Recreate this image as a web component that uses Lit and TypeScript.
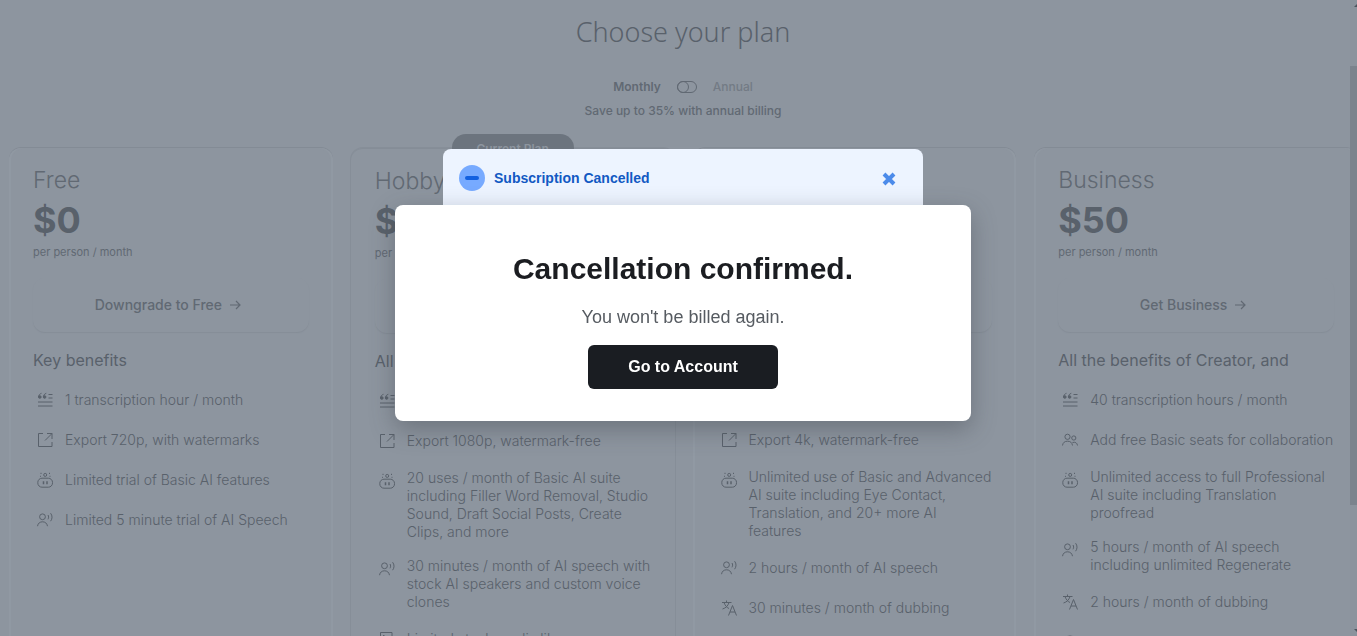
import { LitElement, html, css, svg } from "lit";
import { customElement, property } from "lit/decorators.js";

const glyphs: Record<string, unknown> = {
  quote: svg`<path d="M4.500 1.300C2.600 2 1.600 3.200 1.600 5M9.300 1.300C7.400 2 6.400 3.200 6.400 5M11.500 2.500h4M11.500 6h4M1 10h14.500M1 14h14.500"/><circle cx="2.800" cy="5" r="1.300" fill="currentColor"/><circle cx="7.600" cy="5" r="1.300" fill="currentColor"/>`,
  export: svg`<path d="M6 1.500H1.500v13h13.500V10M10 1.500H15V7M15 1.500L8 8.500"/>`,
  robot: svg`<rect x=".8" y="6.200" width="14.700" height="9" rx="4.200"/><circle cx="8.200" cy="2.900" r="1.500"/><path d="M6.500 9.200v3M10 9.200v3" stroke-width="1.500"/><path d="M4 .8v1.200M12.500 .8v1.200M3.500 3.800v1M13 3.800v1"/>`,
  speech: svg`<circle cx="5.500" cy="4.800" r="2.900"/><path d="M.5 14.200c.5-3 2.400-4.400 5-4.400s4.500 1.400 5 4.400M11 3c.8 1.300.8 3 0 4.300M13.600 1.200c1.900 2.400 1.900 5.600 0 8"/>`,
  people: svg`<circle cx="5.500" cy="4.800" r="2.600"/><circle cx="11.800" cy="6" r="2.100"/><path d="M.5 13.500c.4-2.900 2.200-4.300 5-4.300s4.600 1.400 5 4.300M10.500 10.500c2.800-.7 4.600.3 5 3"/>`,
  dub: svg`<path d="M1 2.500h9.500M5.500 .5v2M8 2.500c-1 3.500-3.200 5.500-6.500 6.500M3 2.500c1 3 2.800 5 5 6M7.500 15.500l4-10 4 10M9 12h5"/>`,
  media: svg`<path d="M13 16V1.500H1.500V16"/><path d="M4 4.500h1.500"/>`,
  globe: svg`<circle cx="8" cy="9" r="7"/><path d="M2 9h12"/>`,
};

interface Benefit { icon: string; text: string }
interface Plan {
  name: string; price: string; action: string; heading: string;
  current?: boolean; benefits: Benefit[];
}

const plans: Plan[] = [
  {
    name: "Free", price: "$0", action: "Downgrade to Free", heading: "Key benefits",
    benefits: [
      { icon: "quote", text: "1 transcription hour / month" },
      { icon: "export", text: "Export 720p, with watermarks" },
      { icon: "robot", text: "Limited trial of Basic AI features" },
      { icon: "speech", text: "Limited 5 minute trial of AI Speech" },
    ],
  },
  {
    name: "Hobbyist", price: "$12", action: "Get Hobbyist", heading: "All the benefits of Free, and", current: true,
    benefits: [
      { icon: "quote", text: "10 transcription hours / month" },
      { icon: "export", text: "Export 1080p, watermark-free" },
      { icon: "robot", text: "20 uses / month of Basic AI suite including Filler Word Removal, Studio Sound, Draft Social Posts, Create Clips, and more" },
      { icon: "speech", text: "30 minutes / month of AI speech with stock AI speakers and custom voice clones" },
      { icon: "media", text: "Limited stock media library" },
    ],
  },
  {
    name: "Creator", price: "$24", action: "Get Creator", heading: "All the benefits of Hobbyist, and",
    benefits: [
      { icon: "quote", text: "30 transcription hours / month" },
      { icon: "export", text: "Export 4k, watermark-free" },
      { icon: "robot", text: "Unlimited use of Basic and Advanced AI suite including Eye Contact, Translation, and 20+ more AI features" },
      { icon: "speech", text: "2 hours / month of AI speech" },
      { icon: "dub", text: "30 minutes / month of dubbing" },
    ],
  },
  {
    name: "Business", price: "$50", action: "Get Business", heading: "All the benefits of Creator, and",
    benefits: [
      { icon: "quote", text: "40 transcription hours / month" },
      { icon: "people", text: "Add free Basic seats for collaboration" },
      { icon: "robot", text: "Unlimited access to full Professional AI suite including Translation proofread" },
      { icon: "speech", text: "5 hours / month of AI speech including unlimited Regenerate" },
      { icon: "dub", text: "2 hours / month of dubbing" },
      { icon: "globe", text: "" },
    ],
  },
];

@customElement("plan-card")
class PlanCard extends LitElement {
  @property({ attribute: false }) plan!: Plan;

  static styles = css`
    :host { display: block; min-width: 0; }
    .card {
      position: relative;
      box-sizing: border-box;
      height: 100%;
      padding: 16px 24px;
      border-radius: 12px;
      box-shadow: 0 -1px 0 #838b95, inset 2px 0 1px #9199a3, inset -2px 0 1px #9199a3;
    }
    .current { border-top: 1px solid #858d97; box-shadow: 0 0 0 1px #868e98; }
    .badge {
      position: absolute;
      top: -15px;
      left: 50%;
      transform: translateX(-50%);
      width: 122px;
      height: 28px;
      border-radius: 14px;
      background: #6c747e;
      color: #8d959f;
      font-size: 12px;
      font-weight: 600;
      line-height: 30px;
      text-align: center;
    }
    .name { margin: 0; font-size: 23px; font-weight: 300; line-height: 32px; }
    .price { margin: 0; font-size: 36px; font-weight: 700; line-height: 48px; color: #59616b; }
    .per { margin: 0; font-size: 11px; line-height: 16px; }
    .action {
      display: flex;
      align-items: center;
      justify-content: center;
      gap: 8px;
      width: 100%;
      height: 54px;
      margin: 18px 0 16px;
      padding: 0 6px 0 0;
      border: 0;
      border-radius: 12px;
      background: none;
      box-shadow: 0 1px 1px #858d97;
      color: inherit;
      font: 500 14px/18px Inter, sans-serif;
    }
    .heading { margin: 0; font-size: 16px; font-weight: 400; line-height: 24px; color: #59616b; }
    .list { display: flex; flex-direction: column; gap: 16px; margin: 16px 0 0; padding: 0; list-style: none; }
    .item { display: flex; align-items: flex-start; gap: 8px; min-height: 24px; font-size: 14px; font-weight: 300; line-height: 18px; color: #59616b; }
    .label { align-self: center; min-width: 0; }
    .icon { flex: none; box-sizing: border-box; width: 24px; height: 24px; padding: 4px; overflow: visible; }
    .icon, .arrow { fill: none; stroke: currentColor; stroke-width: 1; }
    .arrow { width: 11px; height: 11px; stroke-width: 1.2; }
  `;

  render() {
    const p = this.plan;
    return html`
      <article class="card ${p.current ? "current" : ""}">
        ${p.current ? html`<span class="badge">Current Plan</span>` : ""}
        <h2 class="name">${p.name}</h2>
        <p class="price">${p.price}</p>
        <p class="per">per person / month</p>
        <button class="action" type="button">
          ${p.action}
          <svg class="arrow" viewBox="0 0 11 11" aria-hidden="true"><path d="M0 5h10M6 1l4 4-4 4"/></svg>
        </button>
        <h3 class="heading">${p.heading}</h3>
        <ul class="list">
          ${p.benefits.map((b) => html`
            <li class="item">
              <svg class="icon" viewBox="0 0 16 16" aria-hidden="true">${glyphs[b.icon]}</svg>
              <span class="label">${b.text}</span>
            </li>`)}
        </ul>
      </article>`;
  }
}

@customElement("app-root")
class AppRoot extends LitElement {
  static styles = css`
    :host { display: block; font-family: Inter, "Noto Sans", sans-serif; color: #616973; }
    .page { display: flex; height: 100vh; overflow: hidden; background: #8d959f; }
    .main { flex: 1; min-width: 0; display: flex; flex-direction: column; overflow: hidden; }
    .header { display: flex; flex-direction: column; align-items: center; padding: 12px 0 0 16px; }
    .title { margin: 0; font-family: "Noto Sans", sans-serif; font-size: 27px; font-weight: 300; line-height: 40px; color: #59616b; }
    .billing {
      display: flex; align-items: center; gap: 16px;
      margin-top: 24px; font-size: 12px; font-weight: 600; line-height: 22px;
    }
    .annual { color: #737b85; font-weight: 500; }
    .toggle { display: flex; padding: 0; border: 0; background: none; color: inherit; }
    .toggle-art { width: 20px; height: 12px; fill: none; stroke: currentColor; stroke-width: 1; }
    .save { margin: 4px 0 28px; font-size: 12px; font-weight: 500; line-height: 18px; }
    .plans {
      flex: 1;
      display: grid;
      grid-template-columns: repeat(4, minmax(0, 1fr));
      gap: 18px;
      margin: 0 -8px 0 9px;
    }
    .scrollbar {
      flex: none; width: 7px; display: flex; flex-direction: column; justify-content: space-between;
      background: #8b939d; box-sizing: border-box; padding: 3px 0;
    }
    .track { flex: 1; display: flex; flex-direction: column; padding-top: 59px; }
    .thumb { height: 78%; background: #7b838d; }
    .tip { align-self: flex-end; width: 3px; height: 4px; fill: #4c545e; }
    .overlay {
      position: fixed; inset: 0; box-sizing: border-box;
      display: flex; flex-direction: column; align-items: center;
      padding: 149px 0 0 9px;
      font-family: "Liberation Sans", Arial, sans-serif;
    }
    .banner {
      box-sizing: border-box; width: 480px; height: 56px; padding: 2px 27px 0 16px;
      display: flex; align-items: center; gap: 9px;
      border-radius: 8px 8px 0 0; background: #edf4ff; color: #1259c3;
      font-size: 14px; font-weight: 700; line-height: 20px;
    }
    .banner-text { flex: 1; }
    .banner-icon { width: 26px; height: 26px; }
    .close { display: flex; padding: 2px 0 0; border: 0; background: none; }
    .close-art { width: 14px; height: 14px; fill: none; stroke: #4c8bea; stroke-width: 4; }
    .dialog {
      box-sizing: border-box; width: 576px; padding: 40px 32px 32px;
      display: flex; flex-direction: column; align-items: center;
      border-radius: 8px; background: #fff; text-align: center;
      box-shadow: 0 8px 24px rgba(60, 64, 72, 0.4);
    }
    .confirm { margin: 0; color: #1b1d21; font-size: 30px; font-weight: 700; line-height: 48px; }
    .note { margin: 12px 0 16px; color: #565b61; font-size: 18px; line-height: 24px; }
    .go {
      width: 190px; height: 44px; padding: 0; border: 0; border-radius: 6px;
      background: #1a1d22; color: #fff;
      font: 700 16px/24px "Liberation Sans", Arial, sans-serif;
    }
  `;

  render() {
    return html`
      <div class="page">
        <main class="main">
          <header class="header">
            <h1 class="title">Choose your plan</h1>
            <div class="billing">
              <span>Monthly</span>
              <button class="toggle" type="button" role="switch" aria-checked="false" aria-label="Annual billing">
                <svg class="toggle-art" viewBox="0 0 20 12"><rect x=".5" y=".5" width="19" height="11" rx="5.500"/><circle cx="6" cy="6" r="5.500"/></svg>
              </button>
              <span class="annual">Annual</span>
            </div>
            <p class="save">Save up to 35% with annual billing</p>
          </header>
          <section class="plans">
            ${plans.map((p) => html`<plan-card .plan=${p}></plan-card>`)}
          </section>
        </main>
        <div class="scrollbar">
          <svg class="tip" viewBox="0 0 3 4" aria-hidden="true"><path d="M0 4L3 1v3z"/></svg>
          <div class="track"><div class="thumb"></div></div>
          <svg class="tip" viewBox="0 0 3 4" aria-hidden="true"><path d="M0 0h3v3z"/></svg>
        </div>
      </div>
      <div class="overlay">
        <div class="banner" role="status">
          <svg class="banner-icon" viewBox="0 0 26 26" aria-hidden="true"><circle cx="13" cy="13" r="13" fill="#77aaff"/><rect x="6" y="11" width="14" height="4" rx="2" fill="#1260e0"/></svg>
          <span class="banner-text">Subscription Cancelled</span>
          <button class="close" type="button" aria-label="Close">
            <svg class="close-art" viewBox="0 0 14 14"><path d="M2 2l10 10M12 2L2 12"/></svg>
          </button>
        </div>
        <section class="dialog" role="dialog" aria-labelledby="confirm">
          <h2 class="confirm" id="confirm">Cancellation confirmed.</h2>
          <p class="note">You won't be billed again.</p>
          <button class="go" type="button">Go to Account</button>
        </section>
      </div>`;
  }
}
